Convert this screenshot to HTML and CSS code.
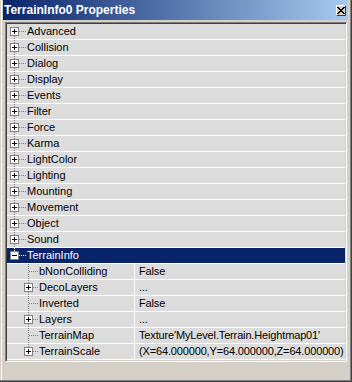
FILE: index.html
```html
<!DOCTYPE html>
<html lang="en">
<head>
    <meta charset="UTF-8">
    <meta name="viewport" content="width=device-width, initial-scale=1.0">
    <title>TerrainInfo0 Properties</title>
    <link rel="stylesheet" href="styles.css">
</head>
<body>
    <div class="window">
        <div class="titlebar">
            <span class="title">TerrainInfo0 Properties</span>
            <span class="close">
                <svg width="8" height="7" viewBox="0 0 8 7" shape-rendering="crispEdges">
                    <path d="M0 0h2v1h-2zM6 0h2v1h-2zM1 1h2v1h-2zM5 1h2v1h-2zM2 2h4v1h-4zM3 3h2v1h-2zM2 4h4v1h-4zM1 5h2v1h-2zM5 5h2v1h-2zM0 6h2v1h-2zM6 6h2v1h-2z" fill="#000"/>
                </svg>
            </span>
        </div>

        <div class="panel">
            <div class="row first"><span class="twig"><span class="box plus"></span></span><span class="label">Advanced</span></div>
            <div class="row"><span class="twig"><span class="box plus"></span></span><span class="label">Collision</span></div>
            <div class="row"><span class="twig"><span class="box plus"></span></span><span class="label">Dialog</span></div>
            <div class="row"><span class="twig"><span class="box plus"></span></span><span class="label">Display</span></div>
            <div class="row"><span class="twig"><span class="box plus"></span></span><span class="label">Events</span></div>
            <div class="row"><span class="twig"><span class="box plus"></span></span><span class="label">Filter</span></div>
            <div class="row"><span class="twig"><span class="box plus"></span></span><span class="label">Force</span></div>
            <div class="row"><span class="twig"><span class="box plus"></span></span><span class="label">Karma</span></div>
            <div class="row"><span class="twig"><span class="box plus"></span></span><span class="label">LightColor</span></div>
            <div class="row"><span class="twig"><span class="box plus"></span></span><span class="label">Lighting</span></div>
            <div class="row"><span class="twig"><span class="box plus"></span></span><span class="label">Mounting</span></div>
            <div class="row"><span class="twig"><span class="box plus"></span></span><span class="label">Movement</span></div>
            <div class="row"><span class="twig"><span class="box plus"></span></span><span class="label">Object</span></div>
            <div class="row"><span class="twig"><span class="box plus"></span></span><span class="label">Sound</span></div>
            <div class="row last selected"><span class="twig"><span class="box minus"></span></span><span class="label">TerrainInfo</span></div>

            <div class="row prop">
                <span class="name"><span class="twig sub"></span><span class="label">bNonColliding</span></span>
                <span class="value">False</span>
            </div>
            <div class="row prop">
                <span class="name"><span class="twig sub"><span class="box plus"></span></span><span class="label">DecoLayers</span></span>
                <span class="value">...</span>
            </div>
            <div class="row prop">
                <span class="name"><span class="twig sub"></span><span class="label">Inverted</span></span>
                <span class="value">False</span>
            </div>
            <div class="row prop">
                <span class="name"><span class="twig sub"><span class="box plus"></span></span><span class="label">Layers</span></span>
                <span class="value">...</span>
            </div>
            <div class="row prop">
                <span class="name"><span class="twig sub"></span><span class="label">TerrainMap</span></span>
                <span class="value">Texture'MyLevel.Terrain.Heightmap01'</span>
            </div>
            <div class="row prop last">
                <span class="name"><span class="twig sub"><span class="box plus"></span></span><span class="label">TerrainScale</span></span>
                <span class="value">(X=64.000000,Y=64.000000,Z=64.000000)</span>
            </div>
        </div>
    </div>
</body>
</html>
```

FILE: styles.css
```css
body {
    margin: 0;
    background: #d4d0c8;
    font-family: "Liberation Sans", Arial, sans-serif;
    font-size: 11px;
    color: #000;
}
.window {
    width: 352px;
    height: 382px;
    box-sizing: border-box;
    padding: 0 4px 20px 3px;
    background: #d4d0c8;
    box-shadow: inset -1px -1px #404040, inset -2px -2px #808080, inset 1px 0 #d4d0c8, inset 2px 0 #fff;
}

/* caption */
.titlebar {
    height: 20px;
    display: flex;
    align-items: center;
    justify-content: space-between;
    padding: 0 2px 0 1px;
    background: linear-gradient(to right, #0a246a, #a6caf0);
}
.title {
    color: #fff;
    font-weight: bold;
    font-size: 12px;
}
.close {
    width: 10px;
    height: 11px;
    box-sizing: border-box;
    display: flex;
    align-items: center;
    justify-content: center;
    background: #d4d0c8;
    border: 1px solid;
    border-color: #fff #404040 #404040 #fff;
}

/* property tree */
.panel {
    margin: 2px 1px 0 2px;
    border: 1px solid;
    border-color: #808080 #fff #fff #808080;
}
.panel > .row:first-child {
    margin-top: 0;
}
.panel {
    box-shadow: inset 1px 1px #404040, inset -1px -1px #d4d0c8;
    padding: 1px;
}
.row {
    --dot: #808080;
    height: 15px;
    line-height: 15px;
    display: flex;
    background: #dcdcdc;
    border-bottom: 1px solid #fff;
    white-space: nowrap;
}
.row.selected {
    --dot: #fff;
    background: #0a246a;
    color: #fff;
}

.twig {
    flex: none;
    align-self: flex-start;
    width: 20px;
    height: 16px;
    box-sizing: border-box;
    padding: 3px 0 0 3px;
    background:
        repeating-linear-gradient(var(--dot) 0 1px, transparent 1px 2px) 7px 0 / 1px 16px no-repeat,
        repeating-linear-gradient(to right, var(--dot) 0 1px, transparent 1px 2px) 8px 7px / 11px 1px no-repeat;
}
.row.first .twig {
    background-position: 7px 8px, 8px 7px;
    background-size: 1px 8px, 11px 1px;
}
.row.last .twig {
    background-size: 1px 8px, 11px 1px;
}
.twig.sub {
    width: 32px;
    padding-left: 17px;
    background:
        repeating-linear-gradient(var(--dot) 0 1px, transparent 1px 2px) 21px 0 / 1px 16px no-repeat,
        repeating-linear-gradient(to right, var(--dot) 0 1px, transparent 1px 2px) 22px 7px / 9px 1px no-repeat;
}
.row.last .twig.sub {
    background-size: 1px 8px, 9px 1px;
}

.box {
    display: block;
    width: 9px;
    height: 9px;
    box-sizing: border-box;
    border: 1px solid #808080;
}
.box.plus {
    background:
        linear-gradient(#000, #000) center / 5px 1px no-repeat,
        linear-gradient(#000, #000) center / 1px 5px no-repeat,
        #fff;
}
.box.minus {
    background:
        linear-gradient(#000, #000) center / 5px 1px no-repeat,
        #fff;
}

.name {
    flex: none;
    width: 127px;
    display: flex;
    overflow: hidden;
}
.value {
    flex: 1;
    min-width: 0;
    overflow: hidden;
    padding-left: 4px;
    border-left: 1px solid #fff;
    letter-spacing: -0.15px;
}
```
